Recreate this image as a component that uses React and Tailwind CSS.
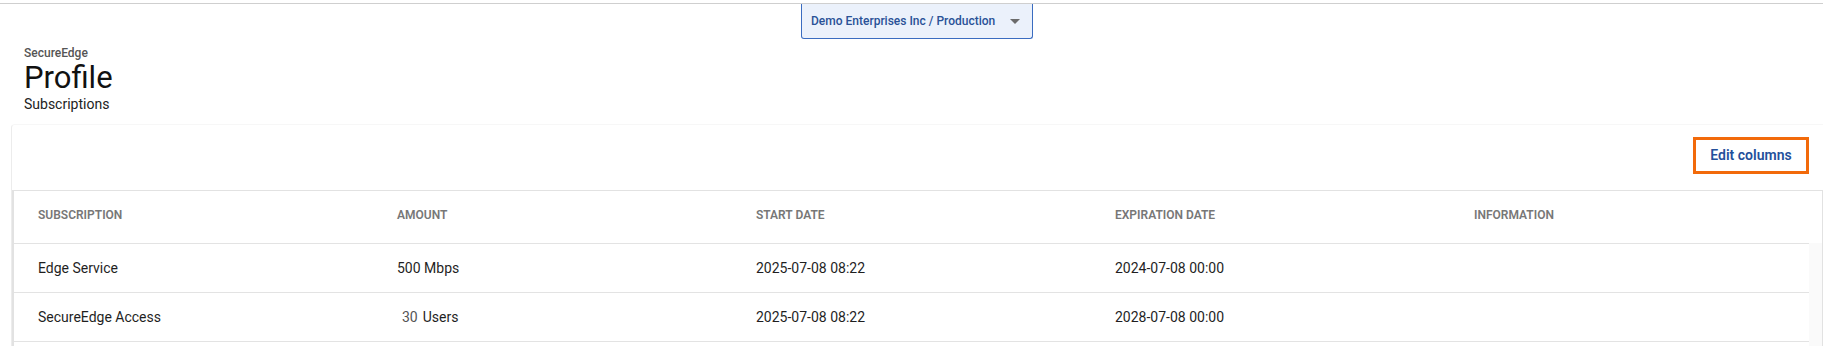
import React from 'react';

const columns = [
  { key: 'subscription', label: 'Subscription' },
  { key: 'amount', label: 'Amount' },
  { key: 'start', label: 'Start Date' },
  { key: 'expiration', label: 'Expiration Date' },
  { key: 'info', label: 'Information' },
];

const rows = [
  { subscription: 'Edge Service', amount: <span>500 Mbps</span>, start: '2025-07-08 08:22', expiration: '2024-07-08 00:00', info: '' },
  {
    subscription: 'SecureEdge Access',
    amount: (
      <span className="ml-[5px]">
        <span className="text-[#555]">30</span>
        <span className="ml-[5px]">Users</span>
      </span>
    ),
    start: '2025-07-08 08:22',
    expiration: '2028-07-08 00:00',
    info: '',
  },
];

const App = () => {
  return (
    <div className="w-[1823px] h-[346px] bg-white overflow-hidden font-['Roboto',sans-serif]">
      {/* top bar line */}
      <div className="pt-[3px]">
        <div className="border-t border-[#cfcfcf]" />
      </div>

      {/* environment selector */}
      <div className="pl-[801px]">
        <button className="w-[232px] h-[35px] flex items-center justify-between pl-[9px] pr-[12px] bg-[#ebf1fb] border border-t-0 border-[#3a6cc0] rounded-b-[3px] text-[12px] font-medium text-[#2a5297]">
          <span>Demo Enterprises Inc / Production</span>
          <svg width="10" height="6" viewBox="0 0 10 6" className="mt-[1px]">
            <path d="M0 0 L10 0 L5 5 Z" fill="#6b6b6b" />
          </svg>
        </button>
      </div>

      {/* page header */}
      <div className="pl-[24px] pt-[7px]">
        <div className="text-[12px] leading-[14px] font-medium text-[#555]">SecureEdge</div>
        <h1 className="text-[31px] leading-[36px] text-[#111]">Profile</h1>
        <div className="text-[14px] leading-[17px] text-[#222]">Subscriptions</div>
      </div>

      {/* card */}
      <div className="mt-[11px] ml-[11px] border-l border-t border-l-[#ececec] border-t-[#f7f7f7] rounded-tl-[4px]">
        <div className="h-[65px] flex justify-end pr-[14px] pt-[12px]">
          <button className="w-[116px] h-[37px] border-[3px] border-[#f26a0a] text-[14px] font-semibold text-[#24509b]">
            Edit columns
          </button>
        </div>

        <div className="border-t border-l-2 border-r border-[#e2e2e2]">
          <div className="flex h-[52px] items-center pb-[4px]">
            {columns.map((c) => (
              <div key={c.key} className="w-[359px] pl-[24px] text-[12px] font-semibold uppercase text-[#777]">
                {c.label}
              </div>
            ))}
          </div>
          {rows.map((r, i) => (
            <div key={i} className="flex">
              <div className="flex h-[49px] items-center border-t border-[#e3e3e3] text-[14px] text-[#1f1f1f]">
                {columns.map((c) => (
                  <div key={c.key} className="w-[359px] pl-[24px]">
                    {r[c.key]}
                  </div>
                ))}
              </div>
              <div className="flex-1 bg-[#fafafa]" />
            </div>
          ))}
          <div className="flex">
            <div className="w-[1795px] border-t border-[#e3e3e3] h-[10px]" />
            <div className="flex-1 bg-[#fafafa]" />
          </div>
        </div>
      </div>
    </div>
  );
};

export default App;
